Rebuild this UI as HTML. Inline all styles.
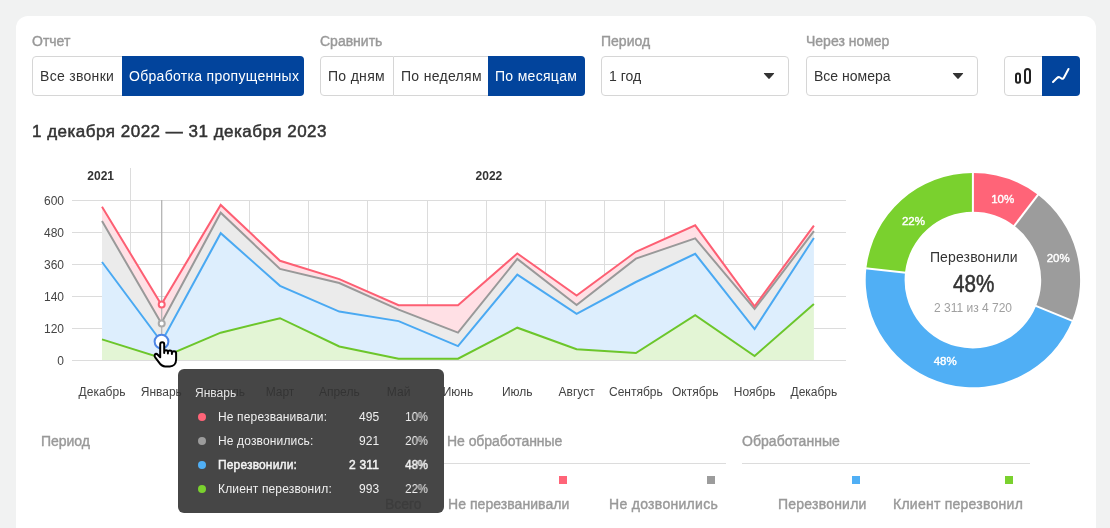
<!DOCTYPE html>
<html><head><meta charset="utf-8">
<style>
*{box-sizing:border-box;margin:0;padding:0}
html,body{width:1110px;height:528px;overflow:hidden;background:#f1f2f2;}
.abs,.lbl,.bt,.sel{will-change:transform}
body{font-family:"Liberation Sans",sans-serif;}
.card{position:absolute;left:16px;top:16px;width:1080px;height:560px;background:#fff;border-radius:12px;}
.abs{position:absolute;white-space:nowrap}
.lbl{position:absolute;font-size:14px;color:#999;line-height:16px;white-space:nowrap;-webkit-text-stroke:0.4px #999}
.bt{position:absolute;top:56px;height:40px;border:1px solid #d6d6d6;background:#fff;font-size:14px;color:#333;line-height:38px;padding-left:7px;white-space:nowrap;letter-spacing:0.3px}
.bt.on{background:#02449c;color:#fff;border:none;line-height:40px}
.sel{position:absolute;top:56px;height:40px;border:1px solid #d6d6d6;border-radius:4px;background:#fff;font-size:14px;color:#333;line-height:38px;padding-left:7px}
.tri{position:absolute;top:16px;width:0;height:0;border-left:5px solid transparent;border-right:5px solid transparent;border-top:6px solid #333}
</style></head><body>
<div class="card"></div>

<div class="lbl" style="left:32px;top:33px">Отчет</div>
<div class="bt" style="left:32px;width:91px;border-radius:4px 0 0 4px">Все звонки</div>
<div class="bt on" style="left:122px;width:182px;border-radius:0 4px 4px 0">Обработка пропущенных</div>

<div class="lbl" style="left:320px;top:33px">Сравнить</div>
<div class="bt" style="left:320px;width:74px;border-radius:4px 0 0 4px">По дням</div>
<div class="bt" style="left:394px;width:95px;border-left:none">По неделям</div>
<div class="bt on" style="left:488px;width:97px;border-radius:0 4px 4px 0">По месяцам</div>

<div class="lbl" style="left:601px;top:33px">Период</div>
<div class="sel" style="left:601px;width:188px">1 год</div>

<div class="lbl" style="left:806px;top:33px">Через номер</div>
<div class="sel" style="left:806px;width:172px">Все номера</div>

<div class="bt" style="left:1004px;width:39px;border-radius:4px 0 0 4px"></div>
<div class="bt on" style="left:1042px;width:38px;border-radius:0 4px 4px 0"></div>
<svg class="abs" style="left:0;top:0" width="1110" height="528">
  <path d="M764.40 72.9 H773.60 Q774.60 72.9 774.00 73.7 L769.70 78.6 Q769.00 79.3 768.30 78.6 L764.00 73.7 Q763.40 72.9 764.40 72.9Z" fill="#333"/><path d="M953.40 72.9 H962.60 Q963.60 72.9 963.00 73.7 L958.70 78.6 Q958.00 79.3 957.30 78.6 L953.00 73.7 Q952.40 72.9 953.40 72.9Z" fill="#333"/><rect x="1016" y="73.6" width="4" height="9.2" rx="2" fill="none" stroke="#222" stroke-width="2"/>
  <rect x="1025" y="69" width="5" height="14" rx="2.5" fill="none" stroke="#222" stroke-width="2"/>
  <path d="M1053 82 L1057 78 Q1058.5 76.5 1060 77.5 L1061.5 78.5 Q1063 79.5 1064 77.5 L1068.5 69" fill="none" stroke="#fff" stroke-width="2" stroke-linecap="round" stroke-linejoin="round"/>
</svg>

<div class="abs" style="left:32px;top:122px;font-size:17px;color:#333;-webkit-text-stroke:0.5px #333;letter-spacing:0.5px">1 декабря 2022 — 31 декабря 2023</div>

<!--CHART-->
<svg class="abs" style="left:0;top:0" width="1110" height="528" font-family="Liberation Sans, sans-serif">
<line x1="72" y1="200.5" x2="846" y2="200.5" stroke="#dcdcdc" stroke-width="1"/><line x1="72" y1="232.5" x2="846" y2="232.5" stroke="#dcdcdc" stroke-width="1"/><line x1="72" y1="264.5" x2="846" y2="264.5" stroke="#dcdcdc" stroke-width="1"/><line x1="72" y1="296.5" x2="846" y2="296.5" stroke="#dcdcdc" stroke-width="1"/><line x1="72" y1="328.5" x2="846" y2="328.5" stroke="#dcdcdc" stroke-width="1"/><line x1="72" y1="360.5" x2="846" y2="360.5" stroke="#dcdcdc" stroke-width="1"/><line x1="130.5" y1="200" x2="130.5" y2="360" stroke="#dcdcdc" stroke-width="1"/><line x1="189.5" y1="200" x2="189.5" y2="360" stroke="#dcdcdc" stroke-width="1"/><line x1="249.5" y1="200" x2="249.5" y2="360" stroke="#dcdcdc" stroke-width="1"/><line x1="308.5" y1="200" x2="308.5" y2="360" stroke="#dcdcdc" stroke-width="1"/><line x1="367.5" y1="200" x2="367.5" y2="360" stroke="#dcdcdc" stroke-width="1"/><line x1="427.5" y1="200" x2="427.5" y2="360" stroke="#dcdcdc" stroke-width="1"/><line x1="486.5" y1="200" x2="486.5" y2="360" stroke="#dcdcdc" stroke-width="1"/><line x1="545.5" y1="200" x2="545.5" y2="360" stroke="#dcdcdc" stroke-width="1"/><line x1="604.5" y1="200" x2="604.5" y2="360" stroke="#dcdcdc" stroke-width="1"/><line x1="664.5" y1="200" x2="664.5" y2="360" stroke="#dcdcdc" stroke-width="1"/><line x1="723.5" y1="200" x2="723.5" y2="360" stroke="#dcdcdc" stroke-width="1"/><line x1="782.5" y1="200" x2="782.5" y2="360" stroke="#dcdcdc" stroke-width="1"/><line x1="130.5" y1="168" x2="130.5" y2="200" stroke="#dcdcdc" stroke-width="1"/>
<polygon points="102.0,206.7 161.3,304.5 220.7,204.9 280.0,260.8 339.3,279.1 398.6,305.2 458.0,305.2 517.3,253.5 576.6,295.5 635.9,251.8 695.2,225.3 754.6,306.3 813.9,225.6 813.9,231.2 754.6,309.0 695.2,238.3 635.9,258.6 576.6,305.0 517.3,258.9 458.0,332.6 398.6,309.7 339.3,283.0 280.0,268.9 220.7,212.7 161.3,323.2 102.0,221.0" fill="#ffe0e5"/>
<polygon points="102.0,221.0 161.3,323.2 220.7,212.7 280.0,268.9 339.3,283.0 398.6,309.7 458.0,332.6 517.3,258.9 576.6,305.0 635.9,258.6 695.2,238.3 754.6,309.0 813.9,231.2 813.9,238.0 754.6,329.0 695.2,253.8 635.9,282.0 576.6,313.9 517.3,274.6 458.0,346.1 398.6,321.1 339.3,311.6 280.0,285.8 220.7,233.2 161.5,342.0 102.0,262.0" fill="#ebebeb"/>
<polygon points="102.0,262.0 161.5,342.0 220.7,233.2 280.0,285.8 339.3,311.6 398.6,321.1 458.0,346.1 517.3,274.6 576.6,313.9 635.9,282.0 695.2,253.8 754.6,329.0 813.9,238.0 813.9,303.9 754.6,356.0 695.2,315.1 635.9,353.0 576.6,349.2 517.3,327.7 458.0,358.7 398.6,358.7 339.3,346.5 280.0,318.2 220.7,332.7 161.3,358.0 102.0,339.4" fill="#ddeefd"/>
<polygon points="102.0,339.4 161.3,358.0 220.7,332.7 280.0,318.2 339.3,346.5 398.6,358.7 458.0,358.7 517.3,327.7 576.6,349.2 635.9,353.0 695.2,315.1 754.6,356.0 813.9,303.9 813.9,360.0 754.6,360.0 695.2,360.0 635.9,360.0 576.6,360.0 517.3,360.0 458.0,360.0 398.6,360.0 339.3,360.0 280.0,360.0 220.7,360.0 161.3,360.0 102.0,360.0" fill="#e3f5d5"/>
<polyline points="102.0,339.4 161.3,358.0 220.7,332.7 280.0,318.2 339.3,346.5 398.6,358.7 458.0,358.7 517.3,327.7 576.6,349.2 635.9,353.0 695.2,315.1 754.6,356.0 813.9,303.9" fill="none" stroke="#6cc62b" stroke-width="2" stroke-linejoin="miter"/>
<polyline points="102.0,262.0 161.5,342.0 220.7,233.2 280.0,285.8 339.3,311.6 398.6,321.1 458.0,346.1 517.3,274.6 576.6,313.9 635.9,282.0 695.2,253.8 754.6,329.0 813.9,238.0" fill="none" stroke="#4aa9f2" stroke-width="2" stroke-linejoin="miter"/>
<polyline points="102.0,221.0 161.3,323.2 220.7,212.7 280.0,268.9 339.3,283.0 398.6,309.7 458.0,332.6 517.3,258.9 576.6,305.0 635.9,258.6 695.2,238.3 754.6,309.0 813.9,231.2" fill="none" stroke="#999999" stroke-width="2" stroke-linejoin="miter"/>
<polyline points="102.0,206.7 161.3,304.5 220.7,204.9 280.0,260.8 339.3,279.1 398.6,305.2 458.0,305.2 517.3,253.5 576.6,295.5 635.9,251.8 695.2,225.3 754.6,306.3 813.9,225.6" fill="none" stroke="#fd5f73" stroke-width="2" stroke-linejoin="miter"/>
<line x1="161.7" y1="200" x2="161.7" y2="360" stroke="#b4b4b4" stroke-width="1.3"/>
<circle cx="161.7" cy="304.4" r="3" fill="#fff" stroke="#fd5f73" stroke-width="2"/>
<circle cx="161.7" cy="323.4" r="3" fill="#fff" stroke="#aaa" stroke-width="2"/>
<circle cx="161.5" cy="341.6" r="6.9" fill="#fff" stroke="#4d86e6" stroke-width="2"/>
<g font-size="12" fill="#444"><text x="64" y="205.0" text-anchor="end">600</text><text x="64" y="237.0" text-anchor="end">480</text><text x="64" y="269.0" text-anchor="end">360</text><text x="64" y="301.0" text-anchor="end">140</text><text x="64" y="333.0" text-anchor="end">120</text><text x="64" y="365.0" text-anchor="end">0</text><text x="102.0" y="396.3" text-anchor="middle">Декабрь</text><text x="161.3" y="396.3" text-anchor="middle">Январь</text><text x="220.7" y="396.3" text-anchor="middle">Февраль</text><text x="280.0" y="396.3" text-anchor="middle">Март</text><text x="339.3" y="396.3" text-anchor="middle">Апрель</text><text x="398.6" y="396.3" text-anchor="middle">Май</text><text x="458.0" y="396.3" text-anchor="middle">Июнь</text><text x="517.3" y="396.3" text-anchor="middle">Июль</text><text x="576.6" y="396.3" text-anchor="middle">Август</text><text x="635.9" y="396.3" text-anchor="middle">Сентябрь</text><text x="695.2" y="396.3" text-anchor="middle">Октябрь</text><text x="754.6" y="396.3" text-anchor="middle">Ноябрь</text><text x="813.9" y="396.3" text-anchor="middle">Декабрь</text></g>
<g font-size="12" font-weight="bold" fill="#333"><text x="100.7" y="180.1" text-anchor="middle">2021</text><text x="488.9" y="180.1" text-anchor="middle">2022</text></g>
<path d="M972.90 172.90 A107.2 107.2 0 0 1 1037.86 194.83 L1014.29 225.77 A68.3 68.3 0 0 0 972.90 211.80Z" fill="#ff6478"/><path d="M1037.86 194.83 A107.2 107.2 0 0 1 1072.08 320.78 L1036.09 306.02 A68.3 68.3 0 0 0 1014.29 225.77Z" fill="#9c9c9c"/><path d="M1072.08 320.78 A107.2 107.2 0 0 1 866.35 268.34 L905.01 272.61 A68.3 68.3 0 0 0 1036.09 306.02Z" fill="#50aff5"/><path d="M866.35 268.34 A107.2 107.2 0 0 1 972.90 172.90 L972.90 211.80 A68.3 68.3 0 0 0 905.01 272.61Z" fill="#7ad12e"/><line x1="972.90" y1="212.80" x2="972.90" y2="171.90" stroke="#fff" stroke-width="2"/><line x1="1013.68" y1="226.56" x2="1038.47" y2="194.03" stroke="#fff" stroke-width="2"/><line x1="1035.17" y1="305.64" x2="1073.01" y2="321.16" stroke="#fff" stroke-width="2"/><line x1="906.01" y1="272.71" x2="865.35" y2="268.23" stroke="#fff" stroke-width="2"/>
<g font-size="11.5" fill="#fff" stroke="#fff" stroke-width="0.4" text-anchor="middle">
<text x="1002.7" y="203.3">10%</text><text x="1058.2" y="262">20%</text><text x="913.4" y="224.5">22%</text><text x="945.2" y="365">48%</text></g>
<text x="973.8" y="261.6" text-anchor="middle" font-size="14" fill="#333" letter-spacing="0.15">Перезвонили</text>
<text transform="translate(973.8,292) scale(0.9,1)" text-anchor="middle" font-size="23" fill="#333" stroke="#333" stroke-width="0.5">48%</text>
<text x="973" y="311.8" text-anchor="middle" font-size="12" fill="#a0a0a0">2 311 из 4 720</text>
</svg>


<!--TABLE-->
<div class="abs" style="left:40.6px;top:433px;font-size:14px;color:#999;-webkit-text-stroke:0.4px #999;letter-spacing:-0.05px;line-height:16px">Период</div>
<div class="abs" style="left:446.8px;top:433px;font-size:14px;color:#999;-webkit-text-stroke:0.4px #999;letter-spacing:-0.05px;line-height:16px">Не обработанные</div>
<div class="abs" style="left:742.3px;top:433px;font-size:14px;color:#999;-webkit-text-stroke:0.4px #999;letter-spacing:0.05px;line-height:16px">Обработанные</div>
<div class="abs" style="left:444px;top:463px;width:282px;height:1px;background:#dcdcdc"></div>
<div class="abs" style="left:742px;top:463px;width:288px;height:1px;background:#dcdcdc"></div>
<div class="abs" style="left:559px;top:476px;width:8px;height:8px;background:#ff6478"></div>
<div class="abs" style="left:707px;top:476px;width:8px;height:8px;background:#9c9c9c"></div>
<div class="abs" style="left:852px;top:476px;width:8px;height:8px;background:#50aff5"></div>
<div class="abs" style="left:1005px;top:476px;width:8px;height:8px;background:#7ad12e"></div>
<div class="abs" style="right:540.5px;top:495.5px;font-size:14px;color:#999;-webkit-text-stroke:0.4px #999;letter-spacing:0.05px;line-height:16px">Не перезванивали</div>
<div class="abs" style="right:391.5px;top:495.5px;font-size:14px;color:#999;-webkit-text-stroke:0.4px #999;letter-spacing:0.3px;line-height:16px">Не дозвонились</div>
<div class="abs" style="right:243px;top:495.5px;font-size:14px;color:#999;-webkit-text-stroke:0.4px #999;letter-spacing:0.22px;line-height:16px">Перезвонили</div>
<div class="abs" style="right:87.3px;top:495.5px;font-size:14px;color:#999;-webkit-text-stroke:0.4px #999;letter-spacing:0.25px;line-height:16px">Клиент перезвонил</div>
<div class="abs" style="left:385px;top:495.5px;font-size:14px;color:#999;-webkit-text-stroke:0.4px #999;letter-spacing:-0.05px;line-height:16px">Всего</div>

<!--TOOLTIP-->
<div class="abs" style="left:178px;top:369px;width:266px;height:143.5px;background:rgba(50,50,50,0.9);border-radius:6px"></div>
<div class="abs" style="left:194.8px;top:386px;font-size:12px;color:#e2e2e2;line-height:14px">Январь</div>
<div class="abs tt" style="left:178px;top:405px;width:266px;font-size:12px;color:#fff">
</div>
<div class="abs" style="left:198px;top:413px;width:8px;height:8px;border-radius:50%;background:#ff6478"></div><div class="abs" style="left:217.5px;top:410px;font-size:12px;line-height:14px;color:#f0f0f0;letter-spacing:0.15px">Не перезванивали:</div><div class="abs" style="right:730.7px;top:410px;font-size:12px;line-height:14px;color:#f0f0f0;letter-spacing:0.12px">495</div><div class="abs" style="right:682.3px;transform:scaleX(0.95);transform-origin:100% 50%;top:410px;font-size:12px;line-height:14px;color:#f0f0f0;letter-spacing:0px">10%</div><div class="abs" style="left:198px;top:437px;width:8px;height:8px;border-radius:50%;background:#9c9c9c"></div><div class="abs" style="left:217.5px;top:434px;font-size:12px;line-height:14px;color:#f0f0f0;letter-spacing:0.15px">Не дозвонились:</div><div class="abs" style="right:730.7px;top:434px;font-size:12px;line-height:14px;color:#f0f0f0;letter-spacing:0.12px">921</div><div class="abs" style="right:682.3px;transform:scaleX(0.95);transform-origin:100% 50%;top:434px;font-size:12px;line-height:14px;color:#f0f0f0;letter-spacing:0px">20%</div><div class="abs" style="left:198px;top:461px;width:8px;height:8px;border-radius:50%;background:#50aff5"></div><div class="abs" style="left:217.8px;top:458px;font-size:12px;line-height:14px;color:#f4f4f4;-webkit-text-stroke:0.45px #f4f4f4;letter-spacing:0.15px">Перезвонили:</div><div class="abs" style="right:730.7px;top:458px;font-size:12px;line-height:14px;color:#f4f4f4;-webkit-text-stroke:0.45px #f4f4f4;letter-spacing:0.2px">2 311</div><div class="abs" style="right:682.3px;transform:scaleX(0.95);transform-origin:100% 50%;top:458px;font-size:12px;line-height:14px;color:#f4f4f4;-webkit-text-stroke:0.45px #f4f4f4;letter-spacing:0px">48%</div><div class="abs" style="left:198px;top:485px;width:8px;height:8px;border-radius:50%;background:#7ad12e"></div><div class="abs" style="left:217.5px;top:482px;font-size:12px;line-height:14px;color:#f0f0f0;letter-spacing:0.15px">Клиент перезвонил:</div><div class="abs" style="right:730.7px;top:482px;font-size:12px;line-height:14px;color:#f0f0f0;letter-spacing:0.12px">993</div><div class="abs" style="right:682.3px;transform:scaleX(0.95);transform-origin:100% 50%;top:482px;font-size:12px;line-height:14px;color:#f0f0f0;letter-spacing:0px">22%</div>
<!--HAND-->
<svg class="abs" style="left:0;top:0" width="1110" height="528">
<path transform="translate(-0.6,0)" d="M160.8 357.2 V344.2 a2 2 0 0 1 4 0 V353 V352 a1.85 1.85 0 0 1 3.7 0 V353.5 V352.4 a2 2 0 0 1 4 0 V354 V353.3 a2.1 2.1 0 0 1 4.2 0 V359.5 C176.7 364 174 366.4 170.5 366.4 H165.8 C162.8 366.4 161 364.6 159 361.6 L155.8 357.4 C154.4 355.4 155.6 353.4 157.6 354 Z" fill="#fff" stroke="#000" stroke-width="2" stroke-linejoin="round"/>
</svg>
</body></html>
